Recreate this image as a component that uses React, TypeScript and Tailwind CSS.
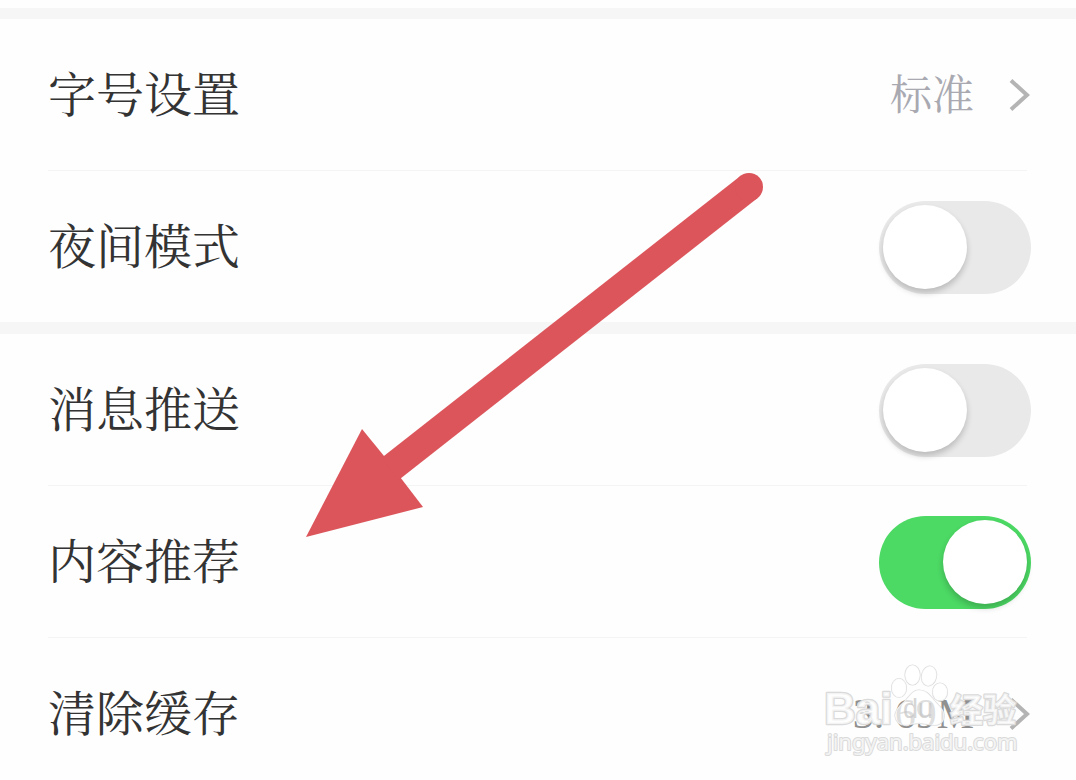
import { useState } from "react";
import type { ReactNode } from "react";

type ToggleProps = {
  id: string;
  checked: boolean;
  onChange: (checked: boolean) => void;
};

function Toggle({ id, checked, onChange }: ToggleProps) {
  return (
    <input
      id={id}
      type="checkbox"
      role="switch"
      checked={checked}
      onChange={(e) => onChange(e.target.checked)}
      className="h-[93px] w-[152px] shrink-0 cursor-pointer appearance-none rounded-full bg-[#e9e9e9] p-1 transition-colors before:block before:size-[84px] before:rounded-full before:bg-white before:shadow-[0_4px_6px_rgba(0,0,0,0.2)] before:transition-transform checked:bg-[#4cd964] checked:before:translate-x-[60px]"
    />
  );
}

function Chevron() {
  return (
    <svg width="22" height="34" viewBox="0 0 22 34" fill="none" stroke="#b4b4b4" strokeWidth="4" aria-hidden="true">
      <path d="M2 2.5L18 17L2 31.5" />
    </svg>
  );
}

function Row({ children }: { children: ReactNode }) {
  return (
    <div className="flex h-[152px] items-center justify-between">
      {children}
    </div>
  );
}

function Divider() {
  return <hr className="-mt-px mr-1 border-[#f4f4f4]" />;
}

function Watermark() {
  return (
    <svg
      className="pointer-events-none absolute top-[22px] -right-1 w-[215px]"
      height="100"
      viewBox="820 660 215 100"
      fill="#ffffff"
      fillOpacity="0.7"
      stroke="#dadada"
      strokeWidth="1.2"
      strokeLinejoin="round"
      paintOrder="stroke"
      aria-hidden="true"
    >
      <text x="824" y="724" fontSize="44" fontWeight="700" strokeWidth="2.5" fontFamily="Liberation Sans, Arial, sans-serif">Bai</text>
      <ellipse cx="899" cy="688" rx="7.5" ry="9.5" />
      <ellipse cx="912.500" cy="675" rx="7.500" ry="10" />
      <ellipse cx="929" cy="676" rx="7.500" ry="10" transform="rotate(12 929 676)" />
      <ellipse cx="940" cy="692" rx="7.500" ry="9" />
      <path d="M919 690C912 690 909 697 904 702C898 707 895 711 895 716C896 723 901 726 908 725C915 723 923 723 930 725C939 727 945 722 944 714C943 708 938 705 934 700C929 694 926 690 919 690Z" />
      <text x="903" y="718" fontSize="27" fill="#c4c4c4" stroke="none" fontFamily="Liberation Sans, Arial, sans-serif">du</text>
      <text x="950" y="722" fontSize="33" fontWeight="700" strokeWidth="2.5" fontFamily="Noto Sans CJK SC, sans-serif">经验</text>
      <text x="827" y="750" fontSize="22" strokeWidth="2" fontFamily="Noto Sans, sans-serif">jingyan.baidu.com</text>
    </svg>
  );
}

function Arrow() {
  return (
    <svg
      className="pointer-events-none absolute top-[172px] left-[305px]"
      width="460"
      height="366"
      viewBox="305 172 460 366"
      fill="#db555b"
      aria-hidden="true"
    >
      <path d="M306 537L362 429L384 456L423 507Z" />
      <path d="M390 469L749 187" stroke="#db555b" strokeWidth="28" />
      <circle cx="749" cy="187" r="14" />
    </svg>
  );
}

export default function App() {
  const [nightMode, setNightMode] = useState(false);
  const [push, setPush] = useState(false);
  const [recommend, setRecommend] = useState(true);

  return (
    <main className="relative min-h-screen overflow-hidden bg-[#fefefe] pt-2 font-['Noto_Serif_CJK_SC','Noto_Sans_CJK_SC',serif] text-5xl text-[#333333]">
      <div className="h-[11px] bg-[#f6f6f6]" />
      <section className="pr-[45px] pl-12">
        <button type="button" className="block w-full cursor-pointer text-left">
          <Row>
            <span className="pb-1.5">字号设置</span>
            <span className="flex items-center gap-[35px] text-[42px] text-[#a9a9b1]">
              <span className="pb-1.5">标准</span>
              <Chevron />
            </span>
          </Row>
        </button>
        <Divider />
        <Row>
          <label htmlFor="night-mode" className="pb-1.5">夜间模式</label>
          <Toggle id="night-mode" checked={nightMode} onChange={setNightMode} />
        </Row>
      </section>

      <div className="-mt-px h-3 bg-[#f6f6f6]" />
      <section className="pr-[45px] pl-12">
        <Row>
          <label htmlFor="push" className="pb-1.5">消息推送</label>
          <Toggle id="push" checked={push} onChange={setPush} />
        </Row>
        <Divider />
        <Row>
          <label htmlFor="recommend" className="pb-1.5">内容推荐</label>
          <Toggle id="recommend" checked={recommend} onChange={setRecommend} />
        </Row>
        <Divider />
        <div className="relative">
          <button type="button" className="block w-full cursor-pointer text-left">
            <Row>
              <span className="pb-1.5">清除缓存</span>
              <span className="flex items-center gap-[35px] font-['Liberation_Serif',serif] text-[42px] text-[#909090]">
                3. 69M
                <Chevron />
              </span>
            </Row>
          </button>
          <Watermark />
        </div>
      </section>

      <Arrow />
    </main>
  );
}
